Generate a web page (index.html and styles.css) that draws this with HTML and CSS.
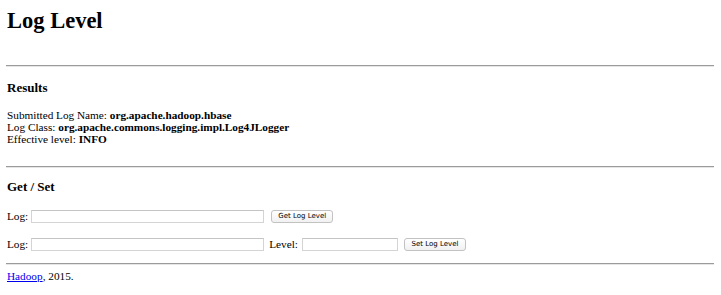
FILE: index.html
```
<!DOCTYPE html>
<html>
<head>
<meta charset="utf-8">
<title>Log Level</title>
<link rel="stylesheet" href="styles.css">
</head>
<body>
<h1 class="title">Log Level</h1>
<hr class="rule rule-top">
<h3 class="section section-results">Results</h3>
<div class="results">
  <div>Submitted Log Name: <b>org.apache.hadoop.hbase</b></div>
  <div>Log Class: <b>org.apache.commons.logging.impl.Log4JLogger</b></div>
  <div>Effective level: <b>INFO</b></div>
</div>
<hr class="rule rule-mid">
<h3 class="section section-getset">Get / Set</h3>
<form class="row row-get">
  <span class="lbl">Log:</span>
  <input class="field field-log" type="text" name="log">
  <input class="btn btn-get" type="submit" value="Get Log Level">
</form>
<form class="row row-set">
  <span class="lbl">Log:</span>
  <input class="field field-log" type="text" name="log">
  <span class="lbl lbl-level">Level:</span>
  <input class="field field-level" type="text" name="level">
  <input class="btn btn-set" type="submit" value="Set Log Level">
</form>
<hr class="rule rule-foot">
<p class="foot"><a href="#">Hadoop</a>, 2015.</p>
</body>
</html>
```

FILE: styles.css
```
html, body {
  margin: 0;
  padding: 0;
  background: #fff;
}
body {
  padding: 8px 7px 0 7px;
  font-family: "Liberation Serif", "Times New Roman", serif;
  font-size: 11.25px;
  line-height: 12px;
  color: #000;
}
.title {
  margin: 0;
  font-size: 22.5px;
  line-height: 25px;
  font-weight: bold;
}
.rule {
  margin: 0 0 0 -1px;
  height: 0;
  border: 0;
  border-top: 1px solid #9b9b9b;
  border-bottom: 1px solid #e6e6e6;
}
.rule-top { margin-top: 32px; }
.rule-mid { margin-top: 21px; }
.rule-foot { margin-top: 11px; }
.section {
  font-size: 13px;
  line-height: 15px;
  font-weight: bold;
}
.section-results { margin: 13px 0 14px 0; }
.section-getset { margin: 11px 0 0 0; }
.results b { font-weight: bold; }
.row {
  margin: 0;
  display: flex;
  align-items: center;
  height: 16px;
}
.row-get { margin-top: 14px; }
.row-set { margin-top: 12px; }
.lbl {
  line-height: 12px;
}
.field {
  box-sizing: border-box;
  height: 13px;
  margin: 0;
  padding: 0;
  border: 1px solid #d4d4d4;
  border-top-color: #c4c4c4;
  background: #fff;
  font-size: 9px;
}
.field-log { width: 233px; margin-left: 3px; }
.lbl-level { margin-left: 5px; }
.field-level { width: 96px; margin-left: 4px; }
.btn {
  box-sizing: border-box;
  height: 13px;
  width: 62px;
  padding: 0;
  margin: 0;
  border: 1px solid #c2c2c2;
  border-radius: 3px;
  background: linear-gradient(#ffffff, #f1f1f1);
  font-family: "DejaVu Sans", "Liberation Sans", sans-serif;
  font-size: 7px;
  line-height: 11px;
  color: #000;
}
.btn-get { margin-left: 7px; }
.btn-set { margin-left: 6px; }
.foot {
  margin: 5px 0 0 0;
  line-height: 12px;
}
.foot a {
  color: #0000ee;
  text-decoration: underline;
}
```
